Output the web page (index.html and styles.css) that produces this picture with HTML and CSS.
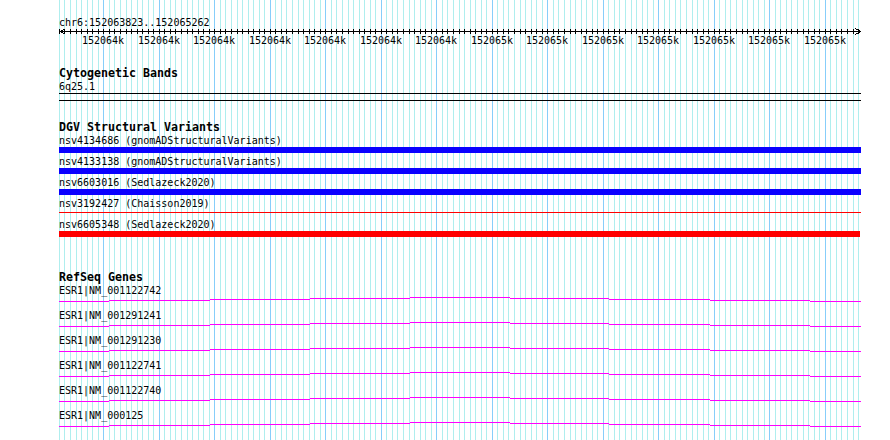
FILE: index.html
```html
<!DOCTYPE html>
<html lang="en">
<head>
    <meta charset="UTF-8">
    <meta name="viewport" content="width=device-width, initial-scale=1.0">
    <title>chr6:152063823..152065262</title>
    <link rel="stylesheet" href="styles.css">
</head>
<body>
    <div class="browser">
        <svg id="grid" class="grid" width="890" height="440"></svg>

        <div class="tracks">
            <div class="ruler">
                <div class="segment">chr6:152063823..152065262</div>
                <svg id="ruler" class="scale" width="804" height="18"></svg>
            </div>

            <div class="track">
                <div class="track-title">Cytogenetic Bands</div>
                <div class="label">6q25.1</div>
                <div class="band"></div>
            </div>

            <div class="track dgv">
                <div class="track-title">DGV Structural Variants</div>
                <div class="feature">
                    <div class="label">nsv4134686 (gnomADStructuralVariants)</div>
                    <div class="bar loss"></div>
                </div>
                <div class="feature">
                    <div class="label">nsv4133138 (gnomADStructuralVariants)</div>
                    <div class="bar loss"></div>
                </div>
                <div class="feature">
                    <div class="label">nsv6603016 (Sedlazeck2020)</div>
                    <div class="bar loss"></div>
                </div>
                <div class="feature">
                    <div class="label">nsv3192427 (Chaisson2019)</div>
                    <div class="bar gain thin"></div>
                </div>
                <div class="feature">
                    <div class="label">nsv6605348 (Sedlazeck2020)</div>
                    <div class="bar gain"></div>
                </div>
            </div>

            <div class="track genes">
                <div class="track-title">RefSeq Genes</div>
                <div class="feature">
                    <div class="label">ESR1|NM_001122742</div>
                    <svg class="transcript" width="802" height="12"><path d="M0 4.5H50M50 3.5H151M151 2.5H251M251 1.5H351M351 0.5H451M451 1.5H550M550 2.5H651M651 3.5H751M751 4.5H802"/></svg>
                </div>
                <div class="feature">
                    <div class="label">ESR1|NM_001291241</div>
                    <svg class="transcript" width="802" height="12"><path d="M0 4.5H50M50 3.5H151M151 2.5H251M251 1.5H351M351 0.5H451M451 1.5H550M550 2.5H651M651 3.5H751M751 4.5H802"/></svg>
                </div>
                <div class="feature">
                    <div class="label">ESR1|NM_001291230</div>
                    <svg class="transcript" width="802" height="12"><path d="M0 4.5H50M50 3.5H151M151 2.5H251M251 1.5H351M351 0.5H451M451 1.5H550M550 2.5H651M651 3.5H751M751 4.5H802"/></svg>
                </div>
                <div class="feature">
                    <div class="label">ESR1|NM_001122741</div>
                    <svg class="transcript" width="802" height="12"><path d="M0 4.5H50M50 3.5H151M151 2.5H251M251 1.5H351M351 0.5H451M451 1.5H550M550 2.5H651M651 3.5H751M751 4.5H802"/></svg>
                </div>
                <div class="feature">
                    <div class="label">ESR1|NM_001122740</div>
                    <svg class="transcript" width="802" height="12"><path d="M0 4.5H50M50 3.5H151M151 2.5H251M251 1.5H351M351 0.5H451M451 1.5H550M550 2.5H651M651 3.5H751M751 4.5H802"/></svg>
                </div>
                <div class="feature">
                    <div class="label">ESR1|NM_000125</div>
                    <svg class="transcript" width="802" height="12"><path d="M0 4.5H50M50 3.5H151M151 2.5H251M251 1.5H351M351 0.5H451M451 1.5H550M550 2.5H651M651 3.5H751M751 4.5H802"/></svg>
                </div>
            </div>
        </div>
    </div>

    <script src="script.js"></script>
</body>
</html>
```

FILE: styles.css
```css
body {
    margin: 0;
    background-color: #ffffff;
    font-family: "DejaVu Sans Mono", "Liberation Mono", monospace;
    font-size: 10px;
    color: #000000;
}
.browser {
    position: relative;
    width: 890px;
    height: 440px;
    overflow: hidden;
}
.grid {
    position: absolute;
    top: 0;
    left: 0;
    shape-rendering: crispEdges;
}
.grid .minor {
    stroke: #afeeee;
}
.grid .major {
    stroke: #87cefa;
}
.tracks {
    position: relative;
    width: 802px;
    padding: 17px 0 0 59px;
}
.segment {
    line-height: 11px;
    white-space: nowrap;
}
.scale {
    display: block;
    overflow: visible;
    shape-rendering: crispEdges;
}
.scale line, .scale path {
    stroke: #000000;
    stroke-width: 1;
    fill: none;
}
.scale text {
    font-family: "DejaVu Sans Mono", "Liberation Mono", monospace;
    font-size: 10px;
    fill: #000000;
}
.track {
    margin-top: 21px;
}
.track.dgv {
    margin-top: 20px;
}
.track.genes {
    margin-top: 34px;
}
.track-title {
    font-weight: bold;
    font-size: 11.63px;
    line-height: 13px;
    white-space: nowrap;
}
.label {
    line-height: 13px;
    white-space: nowrap;
}
.band {
    height: 6px;
    border-top: 1px solid #000000;
    border-bottom: 1px solid #000000;
}
.bar {
    height: 6px;
    margin-bottom: 2px;
}
.bar.loss {
    background-color: #0a00ff;
}
.bar.gain {
    background-color: #ff0000;
    width: 801px;
}
.bar.thin {
    height: 1px;
    margin: 2px 0 5px;
    width: 802px;
}
.transcript {
    display: block;
    shape-rendering: crispEdges;
}
.transcript path {
    stroke: #ff00ff;
    stroke-width: 1;
    fill: none;
}
```

FILE: script.js
```js
const SVG_NS = "http://www.w3.org/2000/svg";
const LEFT = 59;          // left edge of the data area
const FIRST_MAJOR = 103.3; // x of the first 100bp mark
const STEP = 5.55;        // pixels per 10bp

function addLine(svg, x1, y1, x2, y2, cls) {
    const el = document.createElementNS(SVG_NS, "line");
    el.setAttribute("x1", x1);
    el.setAttribute("y1", y1);
    el.setAttribute("x2", x2);
    el.setAttribute("y2", y2);
    if (cls) el.setAttribute("class", cls);
    svg.appendChild(el);
}

const grid = document.getElementById("grid");
const ruler = document.getElementById("ruler");

// ruler axis with arrows at both ends
addLine(ruler, 1, 3.5, 802, 3.5);
const arrows = document.createElementNS(SVG_NS, "path");
arrows.setAttribute("d", "M6.5 0.5L1.5 3.5L6.5 6.5M796.5 0.5L801.5 3.5L796.5 6.5");
ruler.appendChild(arrows);

let labelIndex = 0;
for (let i = -8; i <= 136; i++) {
    const x = Math.round(FIRST_MAJOR + i * STEP);
    const major = i % 10 === 0;
    addLine(grid, x + 0.5, 0, x + 0.5, 440, major ? "major" : "minor");
    addLine(ruler, x - LEFT + 0.5, 1, x - LEFT + 0.5, 6);

    if (major) {
        const text = document.createElementNS(SVG_NS, "text");
        text.setAttribute("x", x - LEFT);
        text.setAttribute("y", 15.5);
        text.setAttribute("text-anchor", "middle");
        text.textContent = labelIndex < 7 ? "152064k" : "152065k";
        ruler.appendChild(text);
        labelIndex++;
    }
}
```
